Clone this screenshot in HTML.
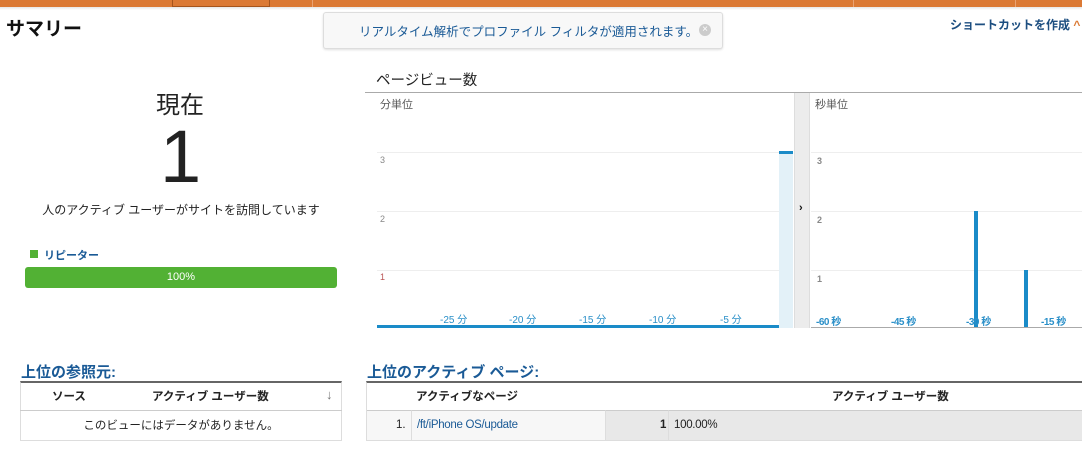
<!DOCTYPE html><html><head><meta charset="utf-8"><style>
*{margin:0;padding:0;box-sizing:border-box}
body{width:1082px;height:463px;overflow:hidden;background:#fff;font-family:"Liberation Sans","Noto Sans CJK JP",sans-serif;position:relative;color:#222}
.a{position:absolute;white-space:nowrap}
.g{position:absolute;height:1px;background:#eee}
.bl{color:#1a5a96}
.xl{position:absolute;font-size:10px;color:#2a8fc8;top:311px}
.sl{position:absolute;font-size:10px;font-weight:bold;color:#2a8fc8;top:313px;letter-spacing:-0.5px}
</style></head><body>
<div class="a" style="left:0;top:0;width:1082px;height:7px;background:#db7934"></div>
<div class="a" style="left:172px;top:0;width:98px;height:7px;border:1px solid #a5541c;border-top:none"></div>
<div class="a" style="left:312px;top:0;width:1px;height:7px;background:#e9a272"></div>
<div class="a" style="left:853px;top:0;width:1px;height:7px;background:#e9a272"></div>
<div class="a" style="left:1015px;top:0;width:1px;height:7px;background:#e9a272"></div>
<div class="a" style="left:0;top:7px;width:1082px;height:3px;background:linear-gradient(#e6e6e6,#fff)"></div>
<div class="a" style="left:6px;top:14px;font-size:19px;font-weight:bold;color:#111">サマリー</div>
<div class="a" style="left:323px;top:12px;width:400px;height:37px;border:1px solid #ddd;border-radius:3px;background:#f8f8f8;box-shadow:0 1px 2px #e0e0e0"></div>
<div class="a bl" style="left:359px;top:21px;font-size:12.5px">リアルタイム解析でプロファイル フィルタが適用されます。</div>
<div class="a" style="left:699px;top:24px;width:12px;height:12px;border-radius:6px;background:#ccc;color:#fff;font-size:10px;line-height:12px;text-align:center">×</div>
<div class="a" style="left:950px;top:16px;font-size:12px;font-weight:bold;color:#1c4e80">ショートカットを作成 <span style="color:#db7934">^</span></div>

<div class="a" style="left:156px;top:85px;font-size:24px;color:#222">現在</div>
<div class="a" style="left:160px;top:117px;font-size:74px;color:#222;line-height:80px">1</div>
<div class="a" style="left:38px;top:201px;width:286px;text-align:center;font-size:12px">人のアクティブ ユーザーがサイトを訪問しています</div>
<div class="a" style="left:30px;top:250px;width:8px;height:8px;background:#52b134"></div>
<div class="a bl" style="left:44px;top:247px;font-size:11px;font-weight:bold">リピーター</div>
<div class="a" style="left:25px;top:267px;width:312px;height:21px;border-radius:3px;background:#52b134;color:#fff;font-size:11px;text-align:center;line-height:21px">100%</div>

<div class="a" style="left:376px;top:69px;font-size:14.5px;color:#222">ページビュー数</div>
<div class="a" style="left:365px;top:92px;width:717px;height:1px;background:#aaa"></div>
<div class="a" style="left:380px;top:96px;font-size:11px;color:#555">分単位</div>
<div class="g" style="left:377px;top:152px;width:402px"></div>
<div class="g" style="left:377px;top:211px;width:402px"></div>
<div class="g" style="left:377px;top:270px;width:402px"></div>
<div class="a" style="left:380px;top:155px;font-size:9px;color:#888">3</div>
<div class="a" style="left:380px;top:214px;font-size:9px;color:#888">2</div>
<div class="a" style="left:380px;top:272px;font-size:9px;color:#b55">1</div>
<div class="a" style="left:779px;top:152px;width:14px;height:176px;background:#e3f1f8"></div>
<div class="a" style="left:779px;top:151px;width:14px;height:3px;background:#1a8bc8"></div>
<div class="a" style="left:377px;top:325px;width:402px;height:3px;background:#1a8bc8"></div>
<div class="xl" style="left:440px">-25 分</div>
<div class="xl" style="left:509px">-20 分</div>
<div class="xl" style="left:579px">-15 分</div>
<div class="xl" style="left:649px">-10 分</div>
<div class="xl" style="left:720px">-5 分</div>
<div class="a" style="left:794px;top:93px;width:16px;height:235px;background:#ececec;border-left:1px solid #ddd;border-right:1px solid #ddd"></div>
<div class="a" style="left:799px;top:202px;font-size:11px;font-weight:bold;color:#111">›</div>
<div class="a" style="left:815px;top:96px;font-size:11px;color:#555">秒単位</div>
<div class="g" style="left:811px;top:152px;width:271px"></div>
<div class="g" style="left:811px;top:211px;width:271px"></div>
<div class="g" style="left:811px;top:270px;width:271px"></div>
<div class="a" style="left:817px;top:156px;font-size:9px;font-weight:bold;color:#888">3</div>
<div class="a" style="left:817px;top:215px;font-size:9px;font-weight:bold;color:#888">2</div>
<div class="a" style="left:817px;top:274px;font-size:9px;font-weight:bold;color:#888">1</div>
<div class="a" style="left:974px;top:211px;width:4px;height:117px;background:#1a8bc8"></div>
<div class="a" style="left:1024px;top:270px;width:4px;height:58px;background:#1a8bc8"></div>
<div class="a" style="left:811px;top:327px;width:271px;height:1px;background:#aaa"></div>
<div class="sl" style="left:816px">-60 秒</div>
<div class="sl" style="left:891px">-45 秒</div>
<div class="sl" style="left:966px">-30 秒</div>
<div class="sl" style="left:1041px">-15 秒</div>

<div class="a bl" style="left:21px;top:361px;font-size:15px;font-weight:bold">上位の参照元:</div>
<div class="a" style="left:20px;top:381px;width:322px;height:60px;border:1px solid #ddd;border-top:2px solid #666"></div>
<div class="a" style="left:20px;top:410px;width:322px;height:1px;background:#ccc"></div>
<div class="a" style="left:52px;top:388px;font-size:11.5px;font-weight:bold">ソース</div>
<div class="a" style="left:152px;top:388px;font-size:11.5px;font-weight:bold">アクティブ ユーザー数</div>
<div class="a" style="left:326px;top:387px;font-size:13px;color:#777;font-weight:bold">↓</div>
<div class="a" style="left:20px;top:417px;width:322px;text-align:center;font-size:11.5px">このビューにはデータがありません。</div>

<div class="a bl" style="left:367px;top:361px;font-size:15px;font-weight:bold">上位のアクティブ ページ:</div>
<div class="a" style="left:366px;top:381px;width:730px;height:60px;border:1px solid #ddd;border-top:2px solid #666"></div>
<div class="a" style="left:367px;top:410px;width:44px;height:30px;background:#f7f7f7;border-top:1px solid #ccc"></div>
<div class="a" style="left:411px;top:410px;width:194px;height:30px;background:#f7f7f7;border-top:1px solid #ccc;border-left:1px solid #ddd"></div>
<div class="a" style="left:605px;top:410px;width:63px;height:30px;background:#e8e8e8;border-top:1px solid #ccc;border-left:1px solid #ddd"></div>
<div class="a" style="left:668px;top:410px;width:414px;height:30px;background:#e8e8e8;border-top:1px solid #ccc;border-left:1px solid #ddd"></div>
<div class="a" style="left:416px;top:388px;font-size:11.5px;font-weight:bold">アクティブなページ</div>
<div class="a" style="left:832px;top:388px;font-size:11.5px;font-weight:bold">アクティブ ユーザー数</div>
<div class="a" style="left:396px;top:419px;font-size:11.5px">1.</div>
<div class="a bl" style="left:417px;top:419px;font-size:11.5px;letter-spacing:-0.3px">/ft/iPhone OS/update</div>
<div class="a" style="left:660px;top:419px;font-size:11.5px;font-weight:bold">1</div>
<div class="a" style="left:674px;top:419px;font-size:11.5px;letter-spacing:-0.3px">100.00%</div>
</body></html>
